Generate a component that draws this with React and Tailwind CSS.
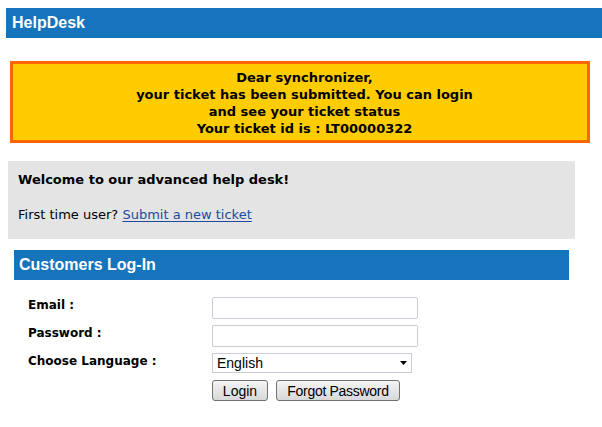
import { useState } from 'react';

const App = () => {
    const [form, setForm] = useState({ email: '', password: '', lang: 'English' });

    return (
        <div className="min-h-screen bg-white pt-2 pb-6 font-['DejaVu_Sans',Verdana,sans-serif] text-black">
            {/* Top bar */}
            <div className="ml-[6px] h-[30px] bg-[#1574bc] flex items-center pl-[6px]">
                <span className="text-white font-bold text-[16px] font-['Liberation_Sans',Arial,sans-serif]">HelpDesk</span>
            </div>

            {/* Notice */}
            <div className="ml-[10px] mt-[23px] w-[580px] h-[82px] border-[3px] border-[#ff6600] bg-[#ffcc00] flex flex-col items-center justify-center pl-[9px] pt-[2px] text-[13px] font-bold leading-[17px] text-center">
                <p>Dear synchronizer,</p>
                <p>your ticket has been submitted. You can login</p>
                <p>and see your ticket status</p>
                <p>Your ticket id is : LT00000322</p>
            </div>

            {/* Welcome */}
            <div className="ml-2 mt-[18px] w-[567px] h-[78px] bg-[#e4e4e4] pl-[10px] pt-[11px] text-[13px]">
                <p className="font-bold leading-[16px]">Welcome to our advanced help desk!</p>
                <p className="mt-[19px] leading-[16px]">
                    First time user?{' '}
                    <a href="#" className="text-[#1c4a9e] underline underline-offset-2">Submit a new ticket</a>
                </p>
            </div>

            {/* Login header */}
            <div className="ml-[14px] mt-[11px] w-[555px] h-[30px] bg-[#1574bc] flex items-center pl-[5px]">
                <span className="text-white font-bold text-[16px] font-['Liberation_Sans',Arial,sans-serif]">Customers Log-In</span>
            </div>

            {/* Form */}
            <form className="ml-7 mt-[17px] grid grid-cols-[184px_auto] gap-y-[6px] text-[12px] font-bold" onSubmit={(e) => e.preventDefault()}>
                <label className="pt-[1px] leading-[14px]">Email :</label>
                <input
                    type="text"
                    className="w-[206px] h-[22px] border border-[#c9ced6] rounded-[2px] px-1 text-[13px] font-normal outline-none"
                    value={form.email}
                    onChange={(e) => setForm({ ...form, email: e.target.value })}
                />

                <label className="pt-[1px] leading-[14px]">Password :</label>
                <input
                    type="password"
                    className="w-[206px] h-[22px] border border-[#c9ced6] rounded-[2px] px-1 text-[13px] font-normal outline-none"
                    value={form.password}
                    onChange={(e) => setForm({ ...form, password: e.target.value })}
                />

                <label className="pt-[1px] leading-[14px]">Choose Language :</label>
                <div className="relative w-[200px] h-[20px]">
                    <select
                        className="appearance-none w-full h-full border border-[#c9ced6] bg-white pl-1 text-[14px] font-normal leading-[18px] font-['Liberation_Sans',Arial,sans-serif] outline-none"
                        value={form.lang}
                        onChange={(e) => setForm({ ...form, lang: e.target.value })}
                    >
                        <option>English</option>
                    </select>
                    <svg className="absolute right-[5px] top-[8px] pointer-events-none" width="7" height="4" viewBox="0 0 7 4">
                        <path d="M0 0h7L3.5 4z" fill="#000" />
                    </svg>
                </div>

                <span />
                <div className="flex gap-2 mt-[1px] font-normal font-['Liberation_Sans',Arial,sans-serif] text-[14px]">
                    <button type="submit" className="w-[56px] h-[21px] border border-[#707070] rounded-[3px] bg-gradient-to-b from-[#f4f4f4] to-[#d8d8d8] leading-none">
                        Login
                    </button>
                    <button type="button" className="w-[124px] h-[21px] border border-[#707070] rounded-[3px] bg-gradient-to-b from-[#f4f4f4] to-[#d8d8d8] leading-none tracking-[-0.3px]">
                        Forgot Password
                    </button>
                </div>
            </form>
        </div>
    );
};

export default App;
